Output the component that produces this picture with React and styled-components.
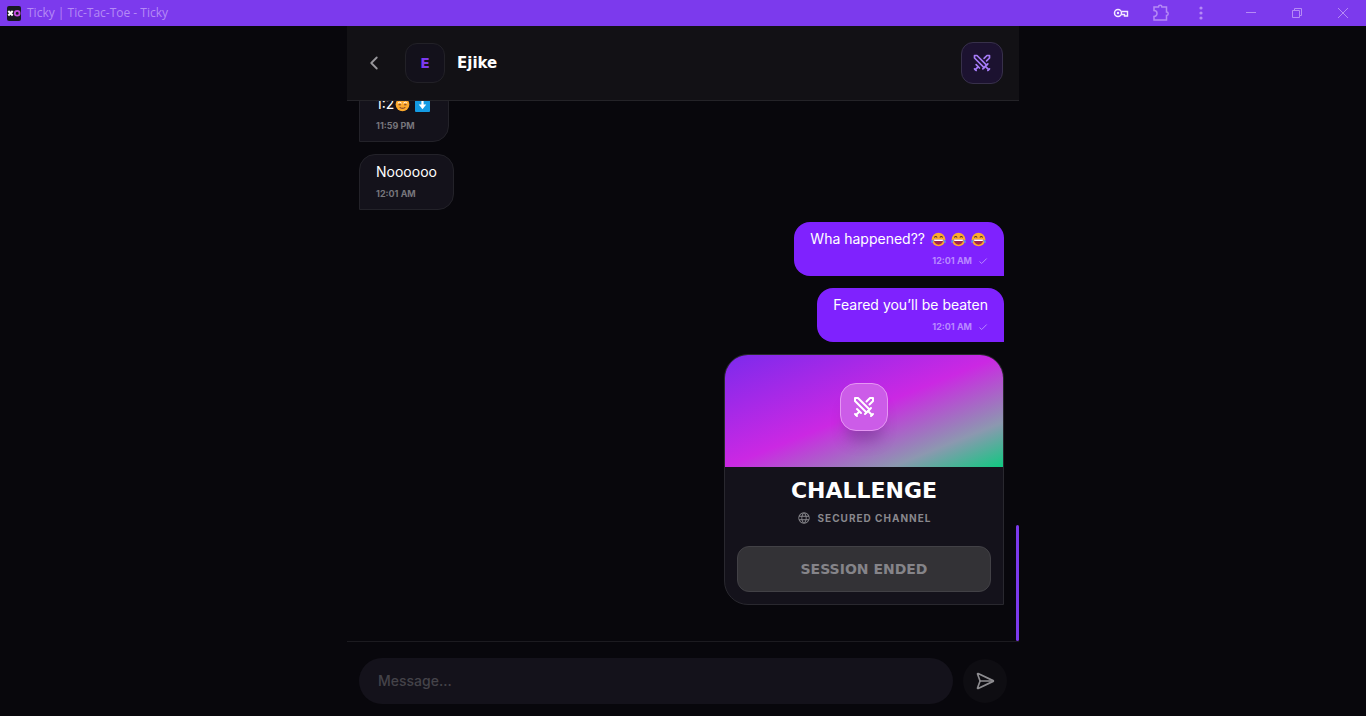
import React from "react";
import styled, { createGlobalStyle, css } from "styled-components";
import { ChevronLeft, SendHorizontal, Swords } from "lucide-react";
import { PiGlobe } from "react-icons/pi";

const GlobalStyle = createGlobalStyle`
  *, *::before, *::after { box-sizing: border-box; }
  body {
    margin: 0;
    background: #08070c;
    color: #fff;
    font-family: Inter, "Liberation Sans", sans-serif;
  }
  button, input { font: inherit; color: inherit; }
  button { padding: 0; cursor: pointer; }
  svg { display: block; flex: none; }
`;

const display = css`
  font-family: "DejaVu Sans", Inter, sans-serif;
  font-weight: 700;
`;

const Screen = styled.div`
  height: 100vh;
  display: flex;
  flex-direction: column;
  overflow: hidden;
`;

const TitleBar = styled.div`
  flex: none;
  height: 26px;
  padding-left: 6px;
  display: flex;
  align-items: center;
  background: #7c3aed;
  color: #b58af5;
`;

const WindowTitle = styled.span`
  flex: 1;
  margin-left: 5px;
  font: 12px/16px "Open Sans", "Noto Sans", sans-serif;
`;

const ButtonGroup = styled.div`
  display: flex;
  margin-left: 7px;
`;

const WindowButton = styled.button`
  width: ${(p) => (p.$wide ? 46 : 40)}px;
  height: 26px;
  display: grid;
  place-items: center;
  border: 0;
  background: none;
`;

const Chat = styled.main`
  flex: 1;
  min-height: 0;
  width: 100%;
  max-width: 672px;
  margin: 0 auto;
  display: flex;
  flex-direction: column;
`;

const Header = styled.header`
  flex: none;
  padding: 16px;
  display: flex;
  align-items: center;
  background: #121115;
  border-bottom: 1px solid #242328;
`;

const BackButton = styled.button`
  width: 22px;
  height: 40px;
  margin-right: 20px;
  display: grid;
  place-items: center;
  border: 0;
  background: none;
  color: #98979b;
`;

const Avatar = styled.div`
  width: 40px;
  height: 40px;
  margin-right: 12px;
  display: grid;
  place-items: center;
  border: 1px solid #222127;
  border-radius: 12px;
  background: #13111b;
  color: #7c3aed;
  font-size: 14px;
  ${display}
`;

const ContactName = styled.h1`
  flex: 1;
  margin: 0;
  font-size: 15px;
  line-height: 20px;
  ${display}
`;

const ChallengeButton = styled.button`
  width: 42px;
  height: 42px;
  display: grid;
  place-items: center;
  border: 1px solid #37304a;
  border-radius: 12px;
  background: #1c1230;
  color: #a67cf8;
`;

const History = styled.section`
  flex: 1;
  min-height: 0;
  display: flex;
  overflow: hidden;
`;

const Messages = styled.div`
  flex: 1;
  min-width: 0;
  padding: 12px 12px 36px;
  display: flex;
  flex-direction: column;
  justify-content: flex-end;
  gap: 12px;
`;

const Scrollbar = styled.div`
  width: 3px;
  height: 116px;
  align-self: flex-end;
  border-radius: 2px;
  background: #7c3aed;
`;

const Bubble = styled.article`
  flex: none;
  max-width: 80%;
  padding: 7px 16px;
  align-self: ${(p) => (p.$own ? "flex-end" : "flex-start")};
  border: ${(p) => (p.$own ? "0" : "1px solid #232229")};
  border-radius: ${(p) => (p.$own ? "16px 16px 0 16px" : "16px 16px 16px 0")};
  background: ${(p) => (p.$own ? "#7f22fe" : "#14121b")};
`;

const MessageText = styled.p`
  margin: 0 0 4px;
  display: flex;
  align-items: center;
  font-size: 14px;
  line-height: 20px;
`;

const EmojiGroup = styled.span`
  display: flex;
  gap: 5px;
  margin-left: ${(p) => p.$space}px;
  padding-right: 2px;
`;

const Meta = styled.div`
  display: flex;
  align-items: center;
  justify-content: ${(p) => (p.$own ? "flex-end" : "flex-start")};
  gap: 6px;
  font-size: 9px;
  font-weight: 700;
  line-height: 16px;
  color: ${(p) => (p.$own ? "#b98aff" : "#77767b")};
`;

const Card = styled.article`
  flex: none;
  width: 280px;
  align-self: flex-end;
  overflow: hidden;
  border: 1px solid #29282f;
  border-radius: 24px 24px 0 24px;
  background: #14121b;
`;

const Banner = styled.div`
  height: 112px;
  display: grid;
  place-items: center;
  background: linear-gradient(to bottom right, #7c2aec 0%, #cb28e3 50%, #8c98b0 80%, #10c981 100%);
`;

const BannerIcon = styled.div`
  width: 48px;
  height: 48px;
  margin-bottom: 8px;
  display: grid;
  place-items: center;
  border: 1px solid #e596f3;
  border-radius: 16px;
  background: #cc5ce8;
  box-shadow: 0 16px 14px -6px rgba(70, 50, 100, 0.35);
`;

const CardBody = styled.div`
  padding: 12px;
  text-align: center;
`;

const CardTitle = styled.h2`
  margin: 0;
  font-size: 22px;
  line-height: 24px;
  ${display}
`;

const Channel = styled.p`
  margin: 8px 0 21px;
  display: flex;
  align-items: center;
  justify-content: center;
  gap: 7px;
  font-size: 10px;
  font-weight: 700;
  line-height: 14px;
  letter-spacing: 1px;
  color: #89888d;
`;

const SessionButton = styled.button`
  width: 100%;
  height: 46px;
  border: 1px solid #424146;
  border-radius: 12px;
  background: #333236;
  color: #858489;
  font-size: 14px;
  ${display}
`;

const Composer = styled.form`
  flex: none;
  padding: 16px 12px 12px;
  display: flex;
  align-items: center;
  gap: 10px;
  border-top: 1px solid #1c1b20;
`;

const MessageInput = styled.input`
  flex: 1;
  min-width: 0;
  height: 46px;
  padding: 0 19px 2px;
  border: 0;
  border-radius: 23px;
  outline: 0;
  background: #14121b;
  font-size: 14px;
  font-weight: 500;
  &::placeholder { color: #444349; opacity: 1; }
`;

const SendButton = styled.button`
  width: 44px;
  height: 44px;
  display: grid;
  place-items: center;
  border: 0;
  border-radius: 50%;
  background: #0e0d12;
  color: #8d8c90;
`;

const AppLogo = () => (
  <svg width="16" height="16" viewBox="0 0 16 16" aria-hidden="true">
    <rect x="1" y="1" width="14" height="15" rx="2" fill="#171a21" />
    <path d="M2.3 6 6.7 10.5M6.7 6 2.3 10.5" stroke="#fff" strokeWidth="2" />
    <circle cx="11.2" cy="8.2" r="2.4" fill="none" stroke="#c550e2" strokeWidth="1.8" />
  </svg>
);

const KeyIcon = () => (
  <svg width="16" height="10" viewBox="0 0 16 10" aria-hidden="true" fill="none" stroke="#f4eaff">
    <circle cx="5" cy="5" r="3.5" strokeWidth="1.5" />
    <circle cx="5" cy="5" r="1.2" fill="#f4eaff" stroke="none" />
    <path d="M8.5 3.5H14.5V8H11.5V6.5H8.5" strokeWidth="1.4" />
  </svg>
);

const PuzzleIcon = () => (
  <svg width="18" height="18" viewBox="0 0 18 18" aria-hidden="true" fill="none" stroke="currentColor" strokeWidth="1.5">
    <path d="M2 3H6.5a1.7 1.7 0 0 1 3.4 0H14.5V8a1.7 1.7 0 0 1 0 3.4V16H2V12.5a3 3 0 0 0 0-6Z" />
  </svg>
);

const DotsIcon = () => (
  <svg width="4" height="14" viewBox="0 0 4 14" aria-hidden="true" fill="currentColor">
    <circle cx="2" cy="2" r="1.6" />
    <circle cx="2" cy="7" r="1.6" />
    <circle cx="2" cy="12" r="1.6" />
  </svg>
);

const WindowGlyph = ({ d }) => (
  <svg width="10" height="10" viewBox="0 0 10 10" aria-hidden="true" fill="none" stroke="currentColor">
    <path d={d} />
  </svg>
);

const Laugh = () => (
  <svg width="15" height="15" viewBox="0 0 16 16" role="img" aria-label="laughing with tears">
    <circle cx="8" cy="8" r="7.3" fill="#fca92c" />
    <path d="M3.5 5.8Q5 3.6 6.6 5.8M9.4 5.8Q11 3.6 12.5 5.8" fill="none" stroke="#5b2d2a" strokeWidth="1.1" />
    <path d="M3 8H13Q12.5 13.5 8 13.5T3 8Z" fill="#a3264f" />
    <path d="M3.2 8H12.8L12.5 9.6H3.5Z" fill="#fff" />
    <path d="M2.8 7.8Q-.8 9.2.3 11.5Q2.8 12.2 2.8 7.8ZM13.2 7.8Q16.8 9.2 15.7 11.5Q13.2 12.2 13.2 7.8Z" fill="#5a91ea" />
  </svg>
);

const Smile = () => (
  <svg width="15" height="15" viewBox="0 0 16 16" role="img" aria-label="smiling face">
    <circle cx="8" cy="8" r="7.3" fill="#fca92c" />
    <path d="M3 6.5Q5 4.5 7 6.5M9 6.5Q11 4.5 13 6.5" fill="none" stroke="#fff" strokeWidth="1" />
    <path d="M3.8 8.2H6.2M9.8 8.2H12.2M5 11Q8 13.2 11 11" fill="none" stroke="#6b362b" strokeWidth="1.1" />
  </svg>
);

const DownArrow = () => (
  <svg width="15" height="15" viewBox="0 0 16 16" role="img" aria-label="down arrow">
    <rect width="16" height="16" rx="1" fill="#149be3" />
    <path d="M8 3V9" stroke="#fff" strokeWidth="2.4" />
    <path d="M4 8H12L8 13Z" fill="#fff" />
  </svg>
);

const Check = () => (
  <svg width="10" height="8" viewBox="0 0 10 8" role="img" aria-label="sent" fill="none" stroke="currentColor">
    <path d="M1.5 4.5 3.7 6.5 8.7 1.5" />
  </svg>
);

const Message = ({ own, time, text, emoji, space = 1 }) => (
  <Bubble $own={own}>
    <MessageText>
      {text}
      {emoji && <EmojiGroup $space={space}>{emoji}</EmojiGroup>}
    </MessageText>
    <Meta $own={own}>
      <time>{time}</time>
      {own && <Check />}
    </Meta>
  </Bubble>
);

export default function App() {
  return (
    <Screen>
      <GlobalStyle />
      <TitleBar>
        <AppLogo />
        <WindowTitle>Ticky | Tic-Tac-Toe - Ticky</WindowTitle>
        <ButtonGroup>
          <WindowButton aria-label="Passwords"><KeyIcon /></WindowButton>
          <WindowButton aria-label="Extensions"><PuzzleIcon /></WindowButton>
          <WindowButton aria-label="Menu"><DotsIcon /></WindowButton>
        </ButtonGroup>
        <ButtonGroup>
          <WindowButton $wide aria-label="Minimize"><WindowGlyph d="M0 4.5H10" /></WindowButton>
          <WindowButton $wide aria-label="Restore">
            <WindowGlyph d="M.5 2.5H7.5V9.5H.5ZM2.5 2.5V.5H9.5V7.5H7.5" />
          </WindowButton>
          <WindowButton $wide aria-label="Close"><WindowGlyph d="M0 0 10 10M10 0 0 10" /></WindowButton>
        </ButtonGroup>
      </TitleBar>

      <Chat>
        <Header>
          <BackButton aria-label="Back"><ChevronLeft size={22} /></BackButton>
          <Avatar aria-hidden="true">E</Avatar>
          <ContactName>Ejike</ContactName>
          <ChallengeButton aria-label="Challenge"><Swords size={20} /></ChallengeButton>
        </Header>

        <History>
          <Messages>
            <Message time="11:59 PM" text="1:2" emoji={<><Smile /><DownArrow /></>} />
            <Message time="12:01 AM" text="Noooooo" />
            <Message own time="12:01 AM" text="Wha happened??" space={6} emoji={<><Laugh /><Laugh /><Laugh /></>} />
            <Message own time="12:01 AM" text="Feared you’ll be beaten" />
            <Card>
              <Banner>
                <BannerIcon><Swords size={24} /></BannerIcon>
              </Banner>
              <CardBody>
                <CardTitle>CHALLENGE</CardTitle>
                <Channel><PiGlobe size={14} />SECURED CHANNEL</Channel>
                <SessionButton disabled>SESSION ENDED</SessionButton>
              </CardBody>
            </Card>
          </Messages>
          <Scrollbar />
        </History>

        <Composer onSubmit={(e) => e.preventDefault()}>
          <MessageInput aria-label="Message" placeholder="Message..." />
          <SendButton aria-label="Send"><SendHorizontal size={20} /></SendButton>
        </Composer>
      </Chat>
    </Screen>
  );
}
